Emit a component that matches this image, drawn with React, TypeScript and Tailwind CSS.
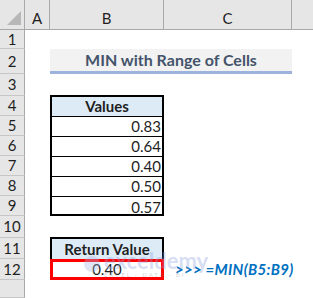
import React from "react";

const rowHeights = [19, 25, 22, 20, 20, 20, 20, 20, 20, 22, 21, 21, 18];
const values = ["0.83", "0.64", "0.40", "0.50", "0.57"];

export default function App() {
  return (
    <div
      className="relative w-[313px] h-[298px] overflow-hidden bg-white text-[15px] text-[#1f1f1f]"
      style={{ fontFamily: "Lato, 'Open Sans', sans-serif" }}
    >
      <div className="grid grid-cols-[25px_25px_114px_128px_21px] grid-rows-[30px_19px_25px_22px_20px_20px_20px_20px_20px_20px_22px_21px_21px_18px]">
        {/* column headers */}
        <div className="col-start-1 row-start-1 bg-[#e6e6e6] border-b border-r border-[#a9a9a9] relative">
          <div className="absolute right-[3px] bottom-[4px] w-0 h-0 border-l-[14px] border-l-transparent border-b-[14px] border-b-[#b7b7b7]" />
        </div>
        <div className="col-start-2 row-start-1 bg-[#e6e6e6] border-b border-r border-[#a9a9a9] flex items-center justify-center pt-[8px]">A</div>
        <div className="col-start-3 row-start-1 bg-[#e6e6e6] border-b border-r border-[#a9a9a9] flex items-center justify-center pt-[8px]">B</div>
        <div className="col-start-4 row-start-1 bg-[#e6e6e6] border-b border-r border-[#a9a9a9] flex items-center justify-center pt-[8px]">C</div>
        <div className="col-start-5 row-start-1 bg-[#e6e6e6] border-b border-[#a9a9a9]" />

        {/* row headers */}
        {rowHeights.map((_, i) => (
          <div
            key={i}
            className="col-start-1 bg-[#e6e6e6] border-r border-r-[#a9a9a9] border-b border-b-[#c6c6c6] flex items-center justify-center"
            style={{ gridRowStart: i + 2 }}
          >
            {i < 12 ? i + 1 : ""}
          </div>
        ))}

        {/* title */}
        <div className="col-start-3 col-span-2 row-start-3 bg-[#f2f2f2] border-b-[3px] border-[#9db2dc] flex items-center justify-center font-bold text-[16px] text-[#44546a]">
          MIN with Range of Cells
        </div>

        {/* values table */}
        <div className="col-start-3 row-start-5 row-span-6 -mt-[1px] border-2 border-black flex flex-col">
          <div className="h-[20px] bg-[#ddebf7] border-b border-black flex items-center justify-center font-bold">
            Values
          </div>
          {values.map((v, i) => (
            <div
              key={v}
              className={`h-[20px] flex items-center justify-end pr-[1px] ${i < values.length - 1 ? "border-b border-black" : ""}`}
            >
              {v}
            </div>
          ))}
        </div>

        {/* return value */}
        <div className="col-start-3 row-start-12 -mt-[1px] border-2 border-b-0 border-black bg-[#ddebf7] flex items-center justify-center font-bold">
          Return Value
        </div>
        <div className="col-start-3 row-start-13 border-[3px] border-[#ff0000] flex items-center justify-center">
          0.40
        </div>
        <div className="col-start-4 row-start-13 flex items-center pl-[11px] whitespace-nowrap font-bold italic text-[15px] tracking-[0.3px] text-[#0070c0]">
          &gt;&gt;&gt; =MIN(B5:B9)
        </div>
      </div>

      {/* watermark */}
      <div className="absolute left-[84px] top-[250px] flex items-center gap-[4px] opacity-35 pointer-events-none">
        <div className="w-[16px] h-[16px] rounded-full bg-[#a7b7e6]" />
        <div className="flex flex-col leading-none">
          <span className="text-[22px] font-bold text-[#8fa3e0]">exceldemy</span>
          <span className="text-[6px] tracking-[2px] text-[#8a8a8a]">EXCEL · DATA · BI</span>
        </div>
      </div>
    </div>
  );
}
